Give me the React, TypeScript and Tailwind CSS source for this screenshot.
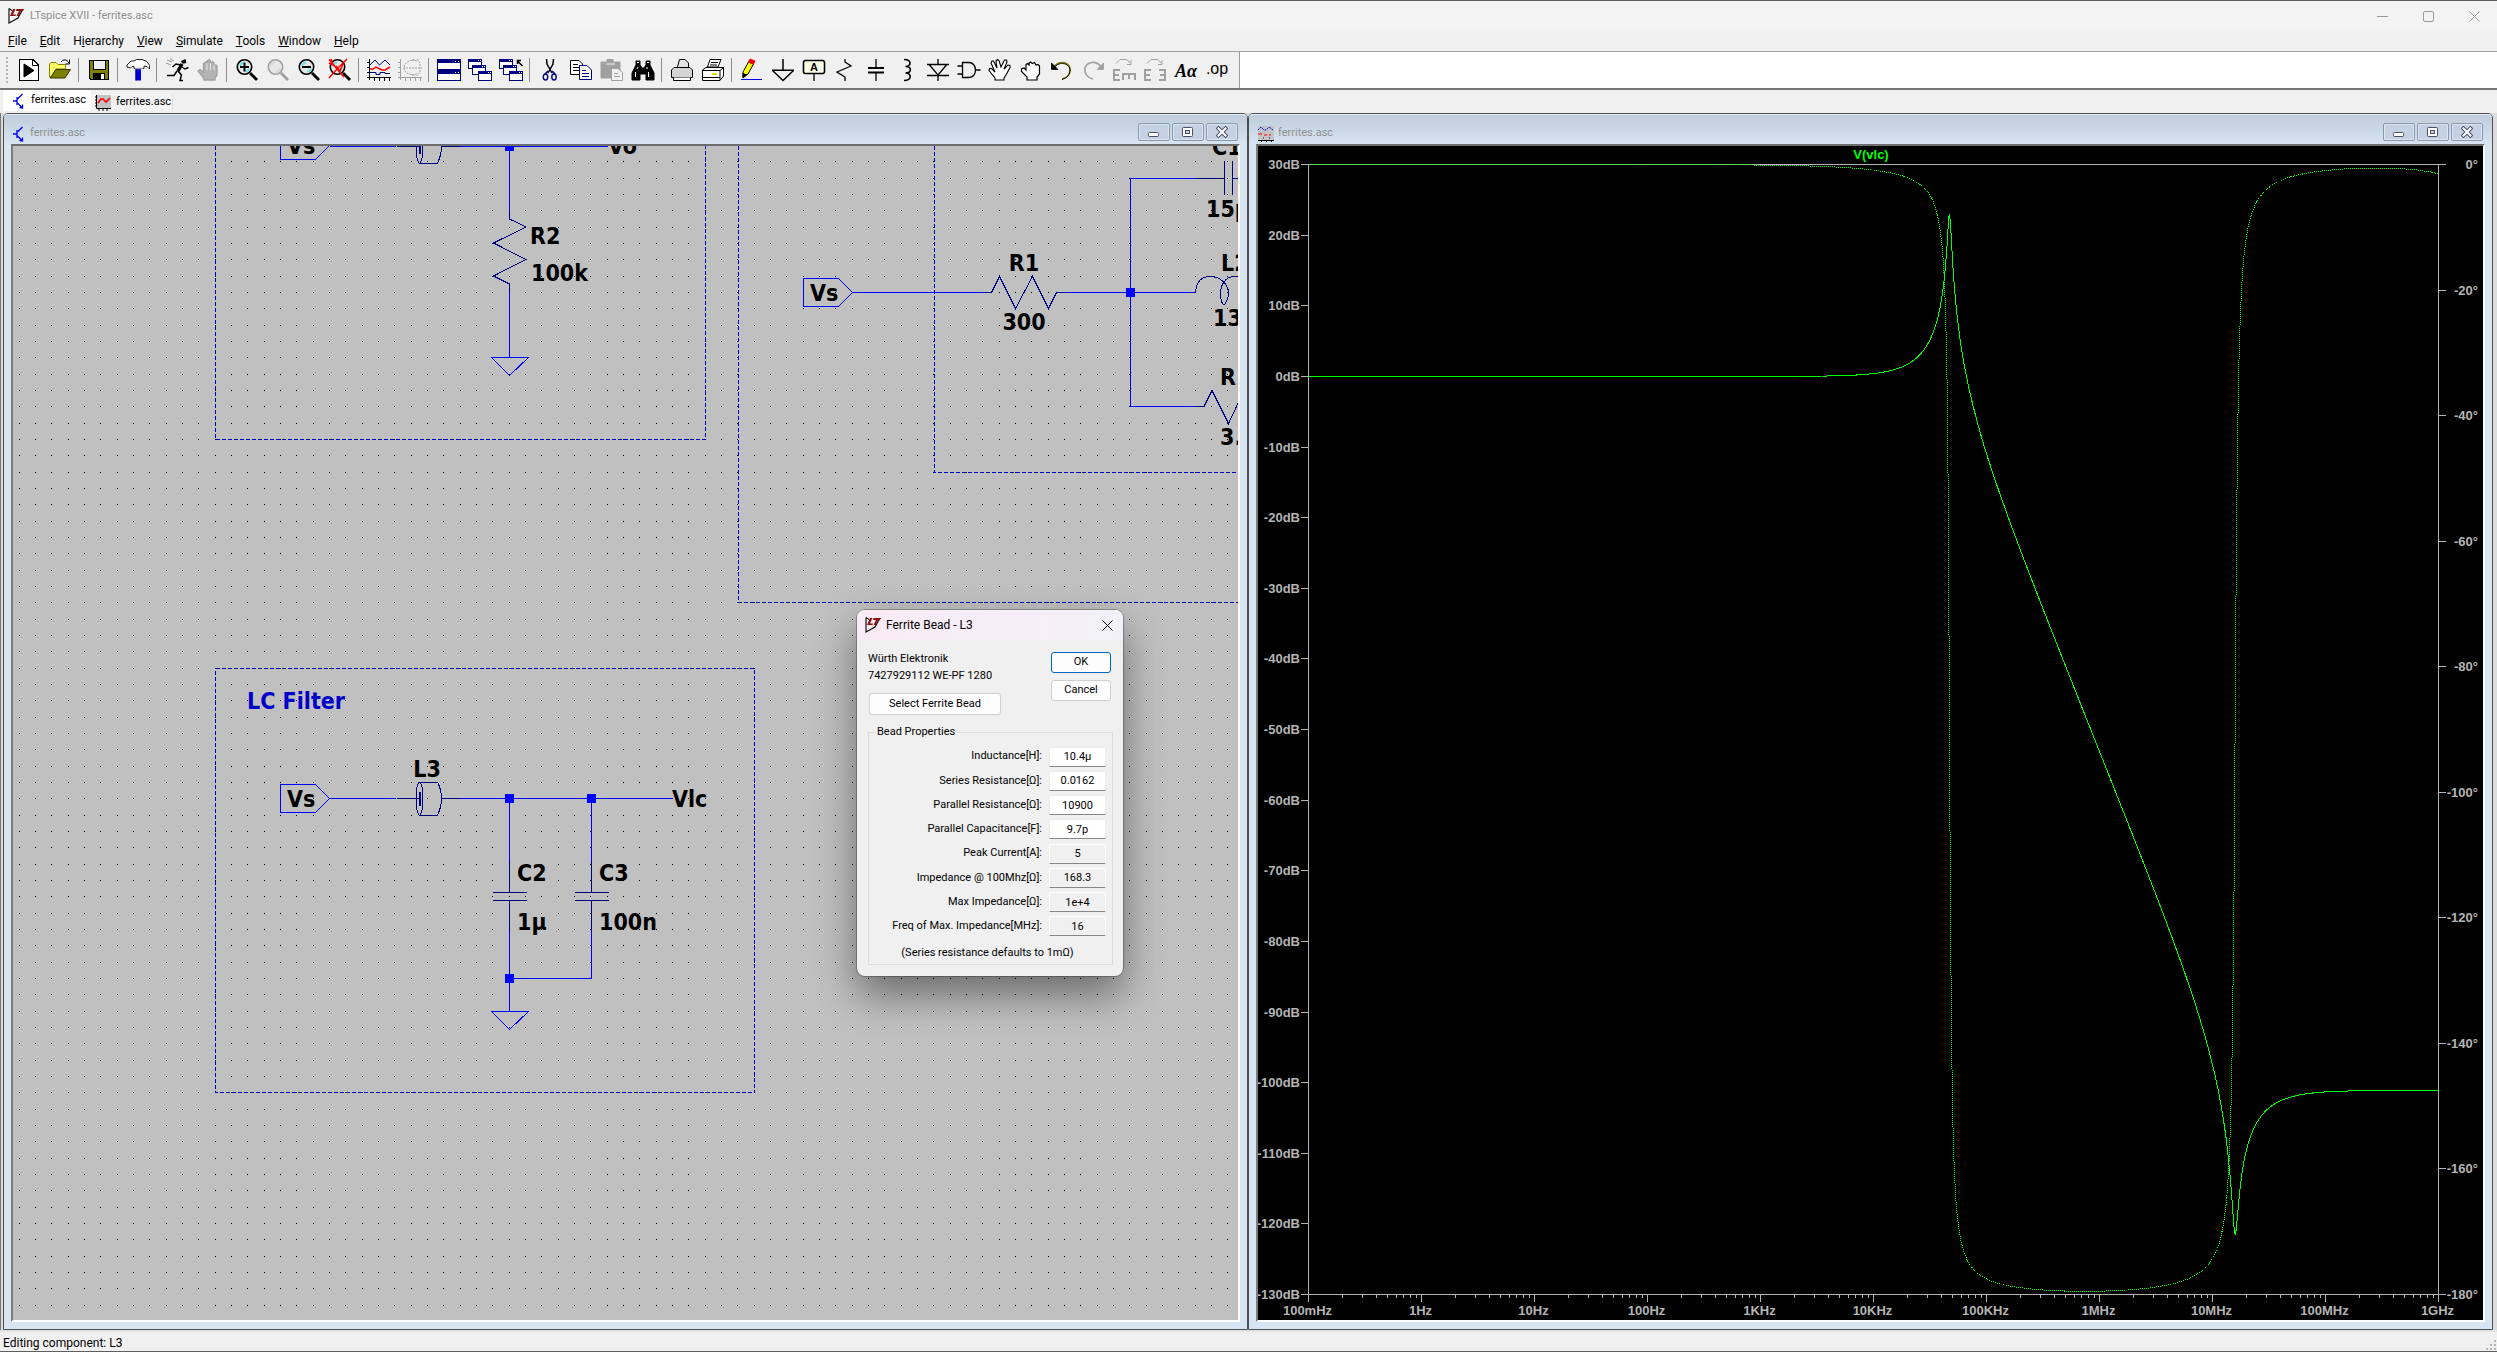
import type { ReactNode } from "react";

const UI_FONT = "font-[Roboto,'Liberation_Sans',sans-serif]";

type IconProps = {
  children: ReactNode;
};

function Icon({ children }: IconProps) {
  return (
    <svg
      aria-hidden="true"
      width="24"
      height="24"
      viewBox="0 0 24 24"
      fill="none"
      stroke="#000"
      className="block shrink-0"
    >
      {children}
    </svg>
  );
}

function AppLogo() {
  return (
    <svg aria-hidden="true" width="16" height="16" viewBox="0 0 16 16" className="block shrink-0">
      <path d="M1 0.500V15L10 10L15 1M1 0.500L4 2.500" fill="none" stroke="#111" strokeWidth="1.200" />
      <path d="M5 1H7.500L5 6.500H8L7.500 8H2Z" fill="#8b1010" />
      <path d="M8.500 1H16L15 3H13L11 8H8.500L11 3H8Z" fill="#8b1010" />
    </svg>
  );
}

function SchematicIcon() {
  return (
    <svg aria-hidden="true" width="13" height="16" viewBox="0 0 13 16" className="block shrink-0">
      <path
        d="M0 8H4M4 4V12M4.500 6L9.500 1M4.500 10L9 14.500M6.500 14.500L9.500 15V11.500"
        fill="none"
        stroke="#00f"
        strokeWidth="1.300"
      />
    </svg>
  );
}

function WaveformIcon() {
  return (
    <svg aria-hidden="true" width="16" height="16" viewBox="0 0 16 16" className="block shrink-0">
      <path d="M1 0H16V13H1Z" fill="#c3c3c3" />
      <path d="M1.500 0V13.500H16M0 2H1M0 5H1M0 8H1M0 11H1M4 14V16M8 14V16M12 14V16" stroke="#000" fill="none" />
      <path d="M3 8L6 4L8 4L11 7L15 3" fill="none" stroke="#f00" strokeWidth="1.600" />
    </svg>
  );
}

function PlotWindowIcon() {
  return (
    <svg aria-hidden="true" width="16" height="16" viewBox="0 0 16 16" className="block shrink-0">
      <path d="M0 0H16V14H0Z" fill="#c3c3c3" />
      <path d="M0 4L3 1L6 4H8L11 1L15 4" fill="none" stroke="#00f" strokeDasharray="2 1" />
      <path d="M0 8H4M6 9H9M11 9H13" stroke="#f00" />
      <path d="M5 12H6M11 12H12" stroke="#008" />
      <path d="M0 14.500H16M3.500 14V16M8.500 14V16M13.500 14V16" stroke="#000" />
    </svg>
  );
}

const GRAY = "#a0a0a0";
const NAVY = "#000080";

const HAND_PATH =
  "M8 22L7 19L2 13L4 11.500L7.500 14V5.500L9.500 4L11 5.500V3L13 1.500L14.500 3V5L16.500 3.500L18 5V8L20 7L21 8.500V17L19 20V22Z";

function Magnifier({ color = "#000", shine = "#5fe8e8" }: { color?: string; shine?: string }) {
  return (
    <>
      <circle cx="9.500" cy="9" r="7.200" stroke={color} strokeWidth="1.600" fill="#e8e8e8" />
      <path d="M5 8C5.500 6 7 4.500 9 4.300M10 13.700C12 13.500 13.500 12 14 10.500" stroke={shine} strokeWidth="1.800" />
      <path d="M15 15L22 22" stroke={color} strokeWidth="2.800" />
    </>
  );
}

function CascadedPanes({ x = 0 }: { x?: number }) {
  return (
    <g stroke={NAVY} shapeRendering="crispEdges">
      {[
        [x + 0.5, 1.5],
        [x + 4.5, 7.5],
        [x + 10.5, 13.5],
      ].map(([left, top]) => (
        <g key={left}>
          <rect x={left} y={top} width="13" height="9" fill="#fff" />
          <rect x={left} y={top} width="13" height="2" fill={NAVY} />
          <path d={`M${left + 9} ${top + 1}h1M${left + 11} ${top + 1}h1`} stroke="#fff" />
        </g>
      ))}
    </g>
  );
}

type Tool = {
  label: string;
  icon: ReactNode;
};

const TOOL_GROUPS: Tool[][] = [
  [
    {
      label: "Run",
      icon: (
        <>
          <path d="M2.500 1.500H16L21.500 7V22.500H2.500Z" fill="#fff" shapeRendering="crispEdges" />
          <path d="M15.500 1.500V7.500H21.500" />
          <path d="M7 6L17 12.500L7 19Z" fill="#000" />
        </>
      ),
    },
    {
      label: "Open",
      icon: (
        <>
          <path d="M1.500 19V6L3 4.500H8L10 6.500H17.500V11H8L3 19.500Z" fill="#ffff66" stroke="#808000" />
          <path d="M2 20L8 11.500H22.500L17 20Z" fill="#808000" stroke="#333300" />
          <path d="M13 4C15 1 19 1 21 5M21.500 1.500V6H17.500" />
        </>
      ),
    },
  ],
  [
    {
      label: "Save",
      icon: (
        <g shapeRendering="crispEdges">
          <path d="M2.500 2.500H21.500V21.500H4L2.500 20Z" fill="#808000" />
          <rect x="6.500" y="2.500" width="12" height="9" fill="#efefef" />
          <rect x="6" y="15" width="12" height="6" fill="#000" stroke="none" />
          <rect x="14" y="16" width="3" height="5" fill="#fff" stroke="none" />
        </g>
      ),
    },
  ],
  [
    {
      label: "Control Panel",
      icon: (
        <>
          <path d="M9.500 10H15V22.500H9.500Z" fill="#0000e0" stroke="none" />
          <path d="M10 10V22.500" stroke="#000070" />
          <path
            d="M1 7L5 3H8L10.500 1.500H16L21 3.500L23.500 7.500V11L21 8.500L18 8V10.500H8V8.500H6L4.500 10L1 9Z"
            fill="#fff"
            stroke="#222"
          />
          <path d="M9 10.500H17" stroke={GRAY} strokeWidth="1.500" />
        </>
      ),
    },
  ],
  [
    {
      label: "Run simulation",
      icon: (
        <>
          <path d="M17 3.500L20 2L20.500 4.500L18 5Z" fill="#000" strokeWidth="1.500" />
          <path d="M17 6L13 13" strokeWidth="3.500" />
          <path d="M16 7L11 6L7.500 9M17 9L20 11L23.500 9.500M13 13L16.500 17L15 22.500H18M12 13L9 17.500H2" strokeWidth="1.500" />
          <path d="M2 2L7 4M1 5L6 7M5 1L9 3" stroke="#999" />
        </>
      ),
    },
    {
      label: "Halt",
      icon: (
        <>
          <path d={HAND_PATH} fill="#b4b4b4" stroke={GRAY} strokeWidth="1.300" />
          <path d="M11 5V12M14.500 5V12M18 7V12" stroke="#e6e6e6" />
        </>
      ),
    },
  ],
  [
    {
      label: "Zoom in",
      icon: (
        <>
          <Magnifier />
          <path d="M5 9H14M9.500 4.500V13.500" strokeWidth="2" />
        </>
      ),
    },
    { label: "Pan", icon: <Magnifier color={GRAY} shine="#d8d8d8" /> },
    {
      label: "Zoom out",
      icon: (
        <>
          <Magnifier />
          <path d="M5 9H14" strokeWidth="2" />
        </>
      ),
    },
    {
      label: "Zoom full",
      icon: (
        <>
          <Magnifier />
          <path d="M1 1.500L16 19M19 1L10 10L1 20M1 5L7 8M3 1L5 6M8 8L12 13L15 6" stroke="#f00" strokeWidth="1.500" />
        </>
      ),
    },
  ],
  [
    {
      label: "Autorange",
      icon: (
        <>
          <path d="M2.500 1V22M0 19.500H24M0 4.500H2M0 9.500H2M0 14.500H2M7.500 20V23M12.500 20V23M17.500 20V23M22.500 20V23" shapeRendering="crispEdges" />
          <path d="M3 7L8 2L12.500 7L18 2L23 7" stroke={NAVY} />
          <path d="M3 11H6L9 9L15 12H18L23 9" stroke="#f00" strokeWidth="1.500" />
          <path d="M3 14.500H9V16.500H13V14.500H18V15.500H23" stroke={NAVY} />
        </>
      ),
    },
    {
      label: "Set limits",
      icon: (
        <>
          <path
            d="M2.500 1V22M0 19.500H24M0 4.500H2M0 9.500H2M0 14.500H2M7.500 20V23M12.500 20V23M17.500 20V23M22.500 20V23"
            stroke={GRAY}
            shapeRendering="crispEdges"
          />
          <path d="M17 2C10 2 6 6 6 10S10 17 17 17M19 1L22 5V14L19 18M5 10H24M14 2L19 3M14 17L19 16" stroke={GRAY} strokeDasharray="2 1" />
        </>
      ),
    },
  ],
  [
    {
      label: "Tile windows",
      icon: (
        <g stroke={NAVY} shapeRendering="crispEdges">
          <rect x="0.500" y="1.500" width="23" height="10" fill="#fff" />
          <rect x="0.500" y="1.500" width="23" height="3" fill={NAVY} />
          <rect x="0.500" y="12.500" width="23" height="10" fill="#fff" />
          <rect x="0.500" y="12.500" width="23" height="3" fill={NAVY} />
          <path d="M18 3.500H19M21 3.500H22M18 14.500H19M21 14.500H22" stroke="#fff" />
        </g>
      ),
    },
    { label: "Cascade windows", icon: <CascadedPanes /> },
    {
      label: "Close windows",
      icon: (
        <>
          <CascadedPanes />
          <path d="M23.500 8L18.500 3M18.500 6V2.500H22" strokeWidth="1.500" />
        </>
      ),
    },
  ],
  [
    {
      label: "Cut",
      icon: (
        <>
          <path d="M8.500 1L9 6L14 15M15.500 1L15 6L10 15" strokeWidth="1.500" />
          <path d="M10 13L7 16M14 13L17 16" stroke={NAVY} strokeWidth="1.500" />
          <ellipse cx="7.500" cy="19" rx="2.200" ry="3" stroke={NAVY} strokeWidth="1.400" />
          <ellipse cx="16" cy="19" rx="2.200" ry="3" stroke={NAVY} strokeWidth="1.400" />
        </>
      ),
    },
    {
      label: "Copy",
      icon: (
        <>
          <path d="M1.500 2.500H10L13.500 6V16.500H1.500Z" fill="#fff" />
          <path d="M4 6.500H9M4 9.500H11M4 12.500H11" />
          <path d="M10.500 7.500H18L22.500 12V21.500H10.500Z" fill="#fff" stroke={NAVY} />
          <path d="M13 12.500H17M13 15.500H20M13 18.500H20" stroke={NAVY} />
        </>
      ),
    },
    {
      label: "Paste",
      icon: (
        <>
          <path d="M1 4H7V1.500H13V4H20V20H1Z" fill={GRAY} stroke={GRAY} />
          <path d="M6 6H15" stroke="#eee" />
          <path d="M11.500 10.500H18L22.500 14.500V22.500H11.500Z" fill="#f0f0f0" stroke={GRAY} />
          <path d="M14 15.500H18M14 18.500H20" stroke={GRAY} />
        </>
      ),
    },
    {
      label: "Find",
      icon: (
        <>
          <path d="M5 3H9V7L11 10H13L15 7V3H19V7L23 15V22H15V16H9V22H1V15L5 7Z" fill="#000" />
          <path d="M6 4.500H8M16 4.500H18M4.500 14V19M17.500 14V19M7 9L6 11M16 9V11" stroke="#fff" />
        </>
      ),
    },
  ],
  [
    {
      label: "Print setup",
      icon: (
        <>
          <path d="M7.500 9L9.500 1.500H15L18.500 5V9" fill="#e4e4e4" />
          <path d="M4 9.500H20L22.500 12V19.500H1.500V12Z" fill="#d4d4d4" />
          <path d="M3.500 19.500V22.500H20.500V19.500" fill="#fff" />
        </>
      ),
    },
    {
      label: "Print",
      icon: (
        <>
          <path d="M6.500 9L9 1.500H20L17 9Z" fill="#fff" />
          <path d="M10 4.500H17M9 7H16" />
          <path d="M1.500 12L5 9.500H22.500V18L19 22.500H1.500Z" fill="#fff" />
          <path d="M1.500 12.500H19V22M19 12.500L22.500 9.500M1.500 19.500H19" />
          <path d="M11 16H16" stroke="#dddd00" strokeWidth="2" />
        </>
      ),
    },
  ],
  [
    {
      label: "Wire",
      icon: (
        <>
          <path d="M3 14L8.500 4L13.500 6L8 16L3 19.500Z" fill="#ff0" />
          <path d="M8.500 4L10 1L15 3L13.500 6Z" fill="#f00" stroke="#f00" />
          <path d="M3 15L3 20L7 16.500" fill="#000" />
          <path d="M1 21.500H22" stroke="#00f" />
        </>
      ),
    },
    {
      label: "Ground",
      icon: <path d="M12 1V12M1 12.200H23M1.500 12.500L12 22.500L22.500 12.500" strokeWidth="1.500" />,
    },
    {
      label: "Label net",
      icon: (
        <>
          <rect x="1.500" y="2.500" width="21" height="13" rx="2" fill="#ffffe8" strokeWidth="1.600" />
          <text x="12" y="13" textAnchor="middle" fontSize="11" fontWeight="700" fill="#000" stroke="none" fontFamily="Liberation Sans, sans-serif">
            A
          </text>
          <path d="M12 16V23" strokeWidth="1.300" />
        </>
      ),
    },
    { label: "Resistor", icon: <path d="M12 1V4L18 8L4 14L12 19V23" strokeWidth="1.300" /> },
    {
      label: "Capacitor",
      icon: (
        <>
          <path d="M12 1V9.500M12 15V23" strokeWidth="1.300" />
          <path d="M4 10H20M4 14.500H20" strokeWidth="2" />
        </>
      ),
    },
    {
      label: "Inductor",
      icon: (
        <path d="M9 1.500C17 1.500 16.500 8.500 10.500 8.500C17 8.500 17 15 10.500 15C17 15 17 22.500 9 22.500" strokeWidth="1.600" />
      ),
    },
    {
      label: "Diode",
      icon: <path d="M12 1V7M12 17V23M1 6.500H23M3.500 7L12 17L20.500 7M1 17.500H23" strokeWidth="1.300" />,
    },
    {
      label: "Component",
      icon: (
        <path d="M5.500 4.500H12C16 4.500 18.500 8 18.500 12S16 19.500 12 19.500H5.500ZM0.500 8H5.500M0.500 16H5.500M18.500 12H23.500" strokeWidth="1.300" />
      ),
    },
    {
      label: "Move",
      icon: (
        <path
          d="M7 22V20L1 12.500L1.500 10.500L3.500 10.500L7 14L3 5L4 3H5.500L9 10L8 3L9.500 1.500L11 2.500L13 9L16.500 2H18.500L19 4L16 11L20 7L22 7.500V9.500L18 17L16 20V22Z"
          fill="#fff"
          strokeWidth="1.100"
        />
      ),
    },
    {
      label: "Drag",
      icon: (
        <path
          d="M8 22V19L2.500 13.500V11L5 10L7 12V6.500L8.500 5.500L10 7V5L11.500 4L13.500 5.500L15.500 4.500L17 7L19 6.500L20.500 8V16L18 19V22Z"
          fill="#fff"
          strokeWidth="1.200"
        />
      ),
    },
    {
      label: "Undo",
      icon: (
        <>
          <path d="M4 9C8 2.500 18 3 20 10C21 16 17 20 12 21" stroke="#808000" strokeWidth="1.500" />
          <path d="M4 10C8 3.500 18 4 20 11C20 17 17 20 12 21.500" strokeWidth="0.900" />
          <path d="M1.500 5V11.500H8Z" fill="#000" strokeWidth="0.800" />
        </>
      ),
    },
    {
      label: "Redo",
      icon: (
        <>
          <path d="M20 9C16 2.500 6 3 4 10C3 16 7 20 12 21" stroke={GRAY} strokeWidth="1.600" />
          <path d="M22.500 5V11.500H16Z" fill={GRAY} stroke={GRAY} strokeWidth="0.800" />
        </>
      ),
    },
    {
      label: "Rotate",
      icon: (
        <>
          <path d="M4 5.500L8 1.500H15L18 5M19 2V6.500H15" stroke={GRAY} />
          <path d="M8 12H2V22H8M2 17H7M11 22V16H23V22M17 16V21" stroke={GRAY} strokeWidth="2" />
        </>
      ),
    },
    {
      label: "Mirror",
      icon: (
        <>
          <path d="M4 5.500L8 1.500H15L18 5M19 2V6.500H15" stroke={GRAY} />
          <path d="M8 12H2V22H8M2 17H7M16 12H22V22H16M22 17H17" stroke={GRAY} strokeWidth="2" />
        </>
      ),
    },
    {
      label: "Text",
      icon: (
        <text x="12" y="19" textAnchor="middle" fontSize="18" fontWeight="700" fontStyle="italic" fill="#000" stroke="none" fontFamily="Liberation Serif, serif">
          Aα
        </text>
      ),
    },
    {
      label: "SPICE directive",
      icon: (
        <text x="12" y="16" textAnchor="middle" fontSize="16" fill="#000" stroke="none" fontFamily="Liberation Sans, sans-serif">
          .op
        </text>
      ),
    },
  ],
];

const MENUS: [string, string, string][] = [
  ["", "F", "ile"],
  ["", "E", "dit"],
  ["H", "i", "erarchy"],
  ["", "V", "iew"],
  ["", "S", "imulate"],
  ["", "T", "ools"],
  ["", "W", "indow"],
  ["", "H", "elp"],
];

function TitleBar() {
  return (
    <header className="flex h-[30px] shrink-0 items-center bg-[#f3f3f3] pl-2 text-[11px] text-[#8f8f8f]">
      <AppLogo />
      <h1 className="ml-[6px]">LTspice XVII - ferrites.asc</h1>
      <div className="ml-auto flex">
        <button type="button" aria-label="Minimize" className="flex w-[46px] items-center justify-center">
          <svg width="11" height="11" stroke="#999" fill="none">
            <path d="M0 5.500H11" />
          </svg>
        </button>
        <button type="button" aria-label="Maximize" className="flex w-[46px] items-center justify-center">
          <svg width="11" height="11" stroke="#999" fill="none">
            <rect x="0.500" y="0.500" width="10" height="10" rx="1.500" />
          </svg>
        </button>
        <button type="button" aria-label="Close" className="flex w-[46px] items-center justify-center">
          <svg width="11" height="11" stroke="#999" fill="none">
            <path d="M0.500 0.500L10.500 10.500M10.500 0.500L0.500 10.500" />
          </svg>
        </button>
      </div>
    </header>
  );
}

function MenuBar() {
  return (
    <nav className="flex h-5 shrink-0 items-center gap-[13px] bg-[#f0f0f0] pl-2 text-[12px] text-black">
      {MENUS.map(([before, key, after]) => (
        <button key={before + key + after} type="button">
          {before}
          <span className="underline">{key}</span>
          {after}
        </button>
      ))}
    </nav>
  );
}

function Toolbar() {
  return (
    <div className="flex h-[39px] shrink-0 border-t border-b-2 border-t-[#a0a0a0] border-b-[#757575] bg-white">
      <div role="toolbar" aria-label="Main" className="flex items-center border-r border-[#999] bg-[#f0f0f0] pl-[6px] pr-[7px]">
        <div className="mr-[5px] h-[26px] border-l-2 border-dotted border-[#b5b5b5]" />
        {TOOL_GROUPS.map((group, index) => (
          <div key={group[0].label} className="flex items-center">
            {index > 0 && <div className="mr-1 ml-[3px] h-6 w-px bg-[#8c8c8c]" />}
            {group.map((tool) => (
              <button
                key={tool.label}
                type="button"
                aria-label={tool.label}
                className="flex w-[31px] items-center justify-center"
              >
                <Icon>{tool.icon}</Icon>
              </button>
            ))}
          </div>
        ))}
      </div>
    </div>
  );
}

function DocumentTabs() {
  return (
    <div role="tablist" className="flex h-[23px] shrink-0 bg-[#f0f0f0] pl-[3px] text-[11px] text-black">
      <button
        type="button"
        role="tab"
        aria-selected="true"
        className="mb-[2px] flex w-[88px] items-center gap-[5px] bg-[#fdfdfd] pl-[10px]"
      >
        <SchematicIcon />
        ferrites.asc
      </button>
      <button
        type="button"
        role="tab"
        aria-selected="false"
        className="mt-1 mb-[2px] flex w-[82px] items-center gap-[5px] border-r border-[#e0e0e0] bg-[#f3f3f3] pl-[4px]"
      >
        <WaveformIcon />
        ferrites.asc
      </button>
    </div>
  );
}

type ChildWindowProps = {
  title: string;
  icon: ReactNode;
  children: ReactNode;
};

const CHILD_BUTTON =
  "flex h-[18px] w-[32px] items-center justify-center rounded-[2px] border border-[#8697b0] bg-[#c3d1e2] shadow-[inset_0_0_0_1px_#dbe6f2]";

function ChildWindow({ title, icon, children }: ChildWindowProps) {
  return (
    <section className="flex min-w-0 flex-1 flex-col rounded-t-[5px] border border-[#4d4d4d] bg-[#d7e4f2] px-[7px] pb-[7px]">
      <div className="-mx-[7px] flex h-[30px] shrink-0 rounded-t-[4px] border-t border-[#e8eef5] bg-linear-to-b from-[#bfcddb] to-[#d7e4f2] px-[9px] text-[11px] text-[#919191]">
        <div className="flex items-center gap-[4px] pt-2">
          {icon}
          <h2>{title}</h2>
        </div>
        <div className="ml-auto flex items-end gap-[2px] pb-[3px]">
          <button type="button" aria-label="Minimize window" className={CHILD_BUTTON}>
            <svg width="12" height="12" fill="#fff" stroke="#4a4f66">
              <rect x="0.500" y="6.500" width="10" height="4" rx="1" />
            </svg>
          </button>
          <button type="button" aria-label="Restore window" className={CHILD_BUTTON}>
            <svg width="12" height="12" fill="#fff" stroke="#4a4f66">
              <rect x="0.500" y="1.500" width="10" height="9" rx="1" />
              <rect x="3.500" y="4.500" width="4" height="3" fill="#c3d1e2" />
            </svg>
          </button>
          <button type="button" aria-label="Close window" className={CHILD_BUTTON}>
            <svg width="12" height="12" strokeLinecap="square">
              <path d="M2.500 2.500L9.500 9.500M9.500 2.500L2.500 9.500" stroke="#4a4f66" strokeWidth="4" />
              <path d="M2.500 2.500L9.500 9.500M9.500 2.500L2.500 9.500" stroke="#fff" strokeWidth="2" />
            </svg>
          </button>
        </div>
      </div>
      <div className="min-h-0 flex-1 overflow-hidden border-2 border-t-[#6e6e6e] border-r-[#fbfbfb] border-b-[#fbfbfb] border-l-[#7d7d7d]">
        {children}
      </div>
    </section>
  );
}

// Schematic -----------------------------------------------------------------

const GRID = 49 / 3;
const WIRE = "#0000ff";
const SYMBOL = "#000080";
const GRAPHIC = "#0000c8";

function gridDots() {
  let d = "";
  for (let row = 0; row < 72; row++) {
    const y = Math.floor(145.4 + row * GRID) + 0.5;
    for (let col = 0; col < 75; col++) {
      d += `M${Math.floor(19.3 + col * GRID)} ${y}h1`;
    }
  }
  return d;
}

const GRID_DOTS = gridDots();

function Node({ x, y }: { x: number; y: number }) {
  return <rect x={x - 4.5} y={y - 4.5} width="9" height="9" fill={WIRE} />;
}

function NetTag({ x, y }: { x: number; y: number }) {
  return (
    <>
      <path d={`M${x} ${y - 14}h35l14 14l-14 14h-35Z`} fill="none" stroke={WIRE} />
      <text x={x + 6.5} y={y + 8.5}>
        Vs
      </text>
    </>
  );
}

function FerriteBead({ x, y }: { x: number; y: number }) {
  return (
    <g stroke={SYMBOL}>
      <path d={`M${x - 23} ${y}h23M${x + 22} ${y}h19`} />
      <ellipse cx={x} cy={y} rx="3.500" ry="16.500" />
      <path d={`M${x} ${y - 16.5}h18q4 8 4 16.500t-4 16.500h-18`} />
      <path d={`M${x} ${y - 7}v14`} strokeWidth="2" />
    </g>
  );
}

function Ground({ x, y }: { x: number; y: number }) {
  return <path d={`M${x - 18} ${y}h37l-19 18Z`} stroke={WIRE} />;
}

function CapacitorSymbol({ x, y }: { x: number; y: number }) {
  return (
    <path
      d={`M${x} ${y - 35}v31M${x} ${y + 4}v29M${x - 17} ${y - 4}h34M${x - 17} ${y + 4}h34`}
      stroke={SYMBOL}
    />
  );
}

function Schematic() {
  return (
    <svg
      role="img"
      aria-label="Schematic ferrites.asc"
      viewBox="13 146 1225 1174"
      preserveAspectRatio="xMinYMin slice"
      fill="none"
      shapeRendering="crispEdges"
      className="block h-full w-full bg-[#c0c0c0]"
    >
      <path d={GRID_DOTS} stroke="#000" />

      <g stroke={GRAPHIC} strokeDasharray="4 2">
        <path d="M215.500 146V439.500H705.500V146" />
        <path d="M738.500 146V602.500H1238" />
        <path d="M934.500 146V472.500H1238" />
        <path d="M215.500 668.500H754.500V1092.500H215.500Z" />
      </g>

      <g stroke={WIRE}>
        <path d="M329.500 146.500H396M460 146.500H608M509.500 146V211M509.500 292V357.500" />
        <path d="M329.500 798.500H396M460 798.500H673M509.500 798V862M509.500 929V1011M591.500 798V862M591.500 929V978.500H509.500" />
        <path d="M853 292.500H986M1063 292.500H1195M1130.500 292.500V178.500H1196M1130.500 292.500V406.500H1196" />
      </g>

      <g stroke={SYMBOL}>
        <path d="M509.500 211V219L526 227L493.500 243L526 259.500L493.500 276L509.500 284V292" />
        <path d="M984 292.500H991.500L999.500 276.500L1015.500 308.500L1032.500 276.500L1048.500 308.500L1056.500 292.500H1065" />
        <path d="M1196 178.500H1224.500M1224.500 161V195M1232.500 161V195M1232.500 178.500H1238" />
        <path d="M1195.500 293C1196 282 1201 276.500 1210 276.500C1222 276.500 1228.500 286 1228.500 293C1228.500 299 1225 304.500 1224 304.500C1222 304.500 1220.500 299 1220.500 293C1220.500 286 1225 276.500 1234 276.500H1238" />
        <path d="M1196 406.500H1204L1212 390.500L1228.500 423.500L1244 390.500" />
      </g>

      <FerriteBead x={419.5} y={146.5} />
      <FerriteBead x={419.5} y={798.5} />
      <CapacitorSymbol x={509.5} y={896.5} />
      <CapacitorSymbol x={591.5} y={896.5} />
      <Ground x={509.5} y={357.5} />
      <Ground x={509.5} y={1011.5} />
      <Node x={509.5} y={146.5} />
      <Node x={509.5} y={798.5} />
      <Node x={591.5} y={798.5} />
      <Node x={509.5} y={978.5} />
      <Node x={1130.5} y={292.5} />

      <g
        fill="#000"
        fontFamily="DejaVu Sans Condensed, DejaVu Sans, sans-serif"
        fontSize="23"
        fontWeight="700"
      >
        <NetTag x={280.5} y={145.5} />
        <NetTag x={280.5} y={798.5} />
        <NetTag x={803.5} y={292.5} />
        <text x="608" y="154">Vo</text>
        <text x="530" y="244">R2</text>
        <text x="531" y="281">100k</text>
        <text x="1024" y="271" textAnchor="middle">R1</text>
        <text x="1024" y="330" textAnchor="middle">300</text>
        <text x="1212" y="155">C1</text>
        <text x="1206" y="217">15p</text>
        <text x="1221" y="271">L2</text>
        <text x="1213" y="326">13</text>
        <text x="1220" y="385">R</text>
        <text x="1220" y="445">3.</text>
        <text x="427" y="777" textAnchor="middle">L3</text>
        <text x="672" y="807">Vlc</text>
        <text x="517" y="881">C2</text>
        <text x="517" y="930">1µ</text>
        <text x="599" y="881">C3</text>
        <text x="599" y="930">100n</text>
        <text x="247" y="709" fill={GRAPHIC}>LC Filter</text>
      </g>
    </svg>
  );
}

// Plot ----------------------------------------------------------------------

const PLOT = { left: 1308.5, right: 2438.5, top: 164.5, bottom: 1294.5 };
const DECADE = (PLOT.right - PLOT.left) / 10;
const DB_STEP = (PLOT.bottom - PLOT.top) / 16;
const DEG_STEP = (PLOT.bottom - PLOT.top) / 9;

const DB_TICKS = Array.from({ length: 17 }, (_, i) => 30 - i * 10);
const DEG_TICKS = Array.from({ length: 10 }, (_, i) => -20 * i);
const FREQ_TICKS = ["100mHz", "1Hz", "10Hz", "100Hz", "1KHz", "10KHz", "100KHz", "1MHz", "10MHz", "100MHz", "1GHz"];

type Complex = [number, number];

function inverse([re, im]: Complex): Complex {
  const m = re * re + im * im;
  return [re / m, -im / m];
}

// V(vlc)/V(vs): ferrite bead in series, 1.1uF to ground
function response(freq: number) {
  const w = 2 * Math.PI * freq;
  const branch = inverse([0.0162, w * 10.4e-6]);
  const bead = inverse([branch[0] + 1 / 10900, branch[1] + w * 9.7e-12]);
  const source = 0.2 + freq / 5e9;
  const xc = -1 / (w * 1.1e-6);
  const total: Complex = [bead[0] + source, bead[1] + xc];
  const db = 20 * Math.log10(-xc / Math.hypot(total[0], total[1]));
  let phase = -90 - (Math.atan2(total[1], total[0]) * 180) / Math.PI;
  if (phase < -180) phase = -180;
  return { db, phase };
}

function buildTraces() {
  const magnitude: string[] = [];
  const phase: string[] = [];
  for (let i = 0; i <= 1000; i++) {
    const point = response(Math.pow(10, i / 100 - 1));
    const x = PLOT.left + (i / 100) * DECADE;
    magnitude.push(`${x.toFixed(1)},${(PLOT.top + ((30 - point.db) / 10) * DB_STEP).toFixed(1)}`);
    phase.push(`${x.toFixed(1)},${(PLOT.top - (point.phase / 20) * DEG_STEP).toFixed(1)}`);
  }
  return { magnitude: magnitude.join(" "), phase: phase.join(" ") };
}

const TRACES = buildTraces();

function BodePlot() {
  return (
    <svg
      role="img"
      aria-label="Plot of V(vlc)"
      viewBox="1258 146 1225 1174"
      fill="none"
      shapeRendering="crispEdges"
      className="block h-full w-full bg-black"
    >
      <g stroke="#b4b4b4">
        <rect x={PLOT.left} y={PLOT.top} width={PLOT.right - PLOT.left} height={PLOT.bottom - PLOT.top} />
        {DB_TICKS.map((db, i) => (
          <path key={db} d={`M1301 ${Math.floor(PLOT.top + i * DB_STEP) + 0.5}h8`} />
        ))}
        {DEG_TICKS.map((deg, i) => (
          <path key={deg} d={`M2439 ${Math.floor(PLOT.top + i * DEG_STEP) + 0.5}h7`} />
        ))}
        {FREQ_TICKS.map((label, i) => (
          <path key={label} d={`M${PLOT.left + i * DECADE} 1295v7`} />
        ))}
        {FREQ_TICKS.slice(0, -1).map((label, i) => (
          <path
            key={label}
            d={[2, 3, 4, 5, 6, 7, 8, 9]
              .map((n) => `M${Math.floor(PLOT.left + (i + Math.log10(n)) * DECADE) + 0.5} 1295v3`)
              .join("")}
          />
        ))}
      </g>

      <polyline points={TRACES.phase} stroke="#00ff00" strokeDasharray="1 1" />
      <polyline points={TRACES.magnitude} stroke="#00ff00" />

      <g fill="#b4b4b4" fontFamily="Liberation Sans, Arial, sans-serif" fontSize="13" fontWeight="700">
        {DB_TICKS.map((db, i) => (
          <text key={db} x="1300" y={Math.floor(PLOT.top + i * DB_STEP) + 5} textAnchor="end">
            {db}dB
          </text>
        ))}
        {DEG_TICKS.map((deg, i) => (
          <text key={deg} x="2478" y={Math.floor(PLOT.top + i * DEG_STEP) + 5} textAnchor="end">
            {i === 0 ? 0 : deg}°
          </text>
        ))}
        {FREQ_TICKS.map((label, i) => (
          <text key={label} x={PLOT.left + i * DECADE - 1} y="1315" textAnchor="middle">
            {label}
          </text>
        ))}
        <text x="1871" y="159" textAnchor="middle" fill="#00ff00">
          V(vlc)
        </text>
      </g>
    </svg>
  );
}

// Dialog --------------------------------------------------------------------

type BeadField = {
  id: string;
  label: string;
  value: string;
  readOnly?: boolean;
};

const BEAD_FIELDS: BeadField[] = [
  { id: "inductance", label: "Inductance[H]:", value: "10.4µ" },
  { id: "rser", label: "Series Resistance[Ω]:", value: "0.0162" },
  { id: "rpar", label: "Parallel Resistance[Ω]:", value: "10900" },
  { id: "cpar", label: "Parallel Capacitance[F]:", value: "9.7p" },
  { id: "ipk", label: "Peak Current[A]:", value: "5", readOnly: true },
  { id: "z100", label: "Impedance @ 100Mhz[Ω]:", value: "168.3", readOnly: true },
  { id: "zmax", label: "Max Impedance[Ω]:", value: "1e+4", readOnly: true },
  { id: "fmax", label: "Freq of Max. Impedance[MHz]:", value: "16", readOnly: true },
];

function FerriteDialog() {
  return (
    <div
      role="dialog"
      aria-labelledby="bead-title"
      className="absolute top-[609px] left-[857px] w-[266px] rounded-lg bg-[#f0f0f0] pb-[11px] text-[11px] text-black shadow-[0_0_0_1px_rgba(0,0,0,0.25),0_18px_40px_rgba(0,0,0,0.45)]"
    >
      <div className="flex h-[30px] items-center rounded-t-lg bg-linear-to-r from-[#faebf4] to-[#f2f1fa] pl-2 text-[12px]">
        <AppLogo />
        <h2 id="bead-title" className="ml-[5px]">
          Ferrite Bead - L3
        </h2>
        <button type="button" aria-label="Close dialog" className="mr-[10px] ml-auto">
          <svg width="11" height="11" stroke="#000" className="block">
            <path d="M0.500 0.500L10.500 10.500M10.500 0.500L0.500 10.500" />
          </svg>
        </button>
      </div>

      <div className="flex justify-between pt-[10px] pr-3 pl-[11px]">
        <div>
          <p className="leading-[17px]">Würth Elektronik</p>
          <p className="leading-[17px]">7427929112 WE-PF 1280</p>
          <button
            type="button"
            className="mt-[9px] ml-px h-[22px] w-[132px] rounded-[3px] border border-[#cfcfcf] bg-[#fdfdfd]"
          >
            Select Ferrite Bead
          </button>
        </div>
        <div className="flex flex-col gap-[7px] pt-[2px]">
          <button type="button" className="h-[21px] w-[60px] rounded-[3px] border border-[#0067c0] bg-[#fdfdfd]">
            OK
          </button>
          <button type="button" className="h-[21px] w-[60px] rounded-[3px] border border-[#cfcfcf] bg-[#fdfdfd]">
            Cancel
          </button>
        </div>
      </div>

      <fieldset className="mr-[10px] ml-[11px] mt-[9px] border border-[#dcdcdc] pr-[6px] pb-[3px]">
        <legend className="ml-[6px] px-[2px]">Bead Properties</legend>
        <div className="mt-[6px] flex h-[190px] flex-col justify-between">
          {BEAD_FIELDS.map((field) => (
            <div key={field.id} className="flex items-center justify-end gap-[7px]">
              <label htmlFor={field.id}>{field.label}</label>
              <input
                id={field.id}
                type="text"
                defaultValue={field.value}
                readOnly={field.readOnly}
                className="h-5 w-[57px] rounded-[1px] border border-[#ececec] border-b-[#868686] bg-white text-center read-only:border-[#fff] read-only:border-b-[#868686] read-only:bg-[#f0f0f0]"
              />
            </div>
          ))}
        </div>
        <p className="mt-2 text-center">(Series resistance defaults to 1mΩ)</p>
      </fieldset>
    </div>
  );
}

export default function App() {
  return (
    <div
      className={`relative flex h-screen min-w-[1280px] flex-col overflow-hidden border-y border-[#5f5f5f] bg-[#f0f0f0] ${UI_FONT}`}
    >
      <TitleBar />
      <MenuBar />
      <Toolbar />
      <DocumentTabs />
      <main className="flex min-h-0 flex-1 border-l border-[#777] bg-[#dcdcdc] pr-[4px] pl-[2px]">
        <ChildWindow title="ferrites.asc" icon={<SchematicIcon />}>
          <Schematic />
        </ChildWindow>
        <ChildWindow title="ferrites.asc" icon={<PlotWindowIcon />}>
          <BodePlot />
        </ChildWindow>
      </main>
      <footer className="flex h-[21px] shrink-0 items-center border-t-2 border-[#e2e2e2] pt-[2px] pl-[3px] text-[12px] text-black">
        Editing component: L3
        <svg aria-hidden="true" width="12" height="12" viewBox="0 0 12 12" fill="#b5b5b5" className="ml-auto self-end">
          <path d="M9 1h2v2h-2zM9 5h2v2h-2zM5 5h2v2h-2zM9 9h2v2h-2zM5 9h2v2h-2zM1 9h2v2h-2z" />
        </svg>
      </footer>
      <FerriteDialog />
    </div>
  );
}
